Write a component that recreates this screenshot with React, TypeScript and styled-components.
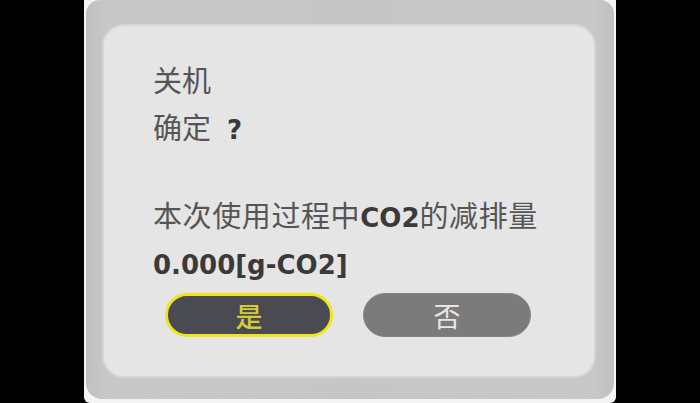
import React from "react";
import styled, { createGlobalStyle } from "styled-components";

const GlobalStyle = createGlobalStyle`
  html, body {
    margin: 0;
    padding: 0;
    background: #000;
    width: 700px;
    height: 403px;
    overflow: hidden;
  }
  #root {
    width: 700px;
    height: 403px;
  }
`;

const Stage = styled.div`
  width: 700px;
  height: 403px;
  display: flex;
  justify-content: center;
  background: #000;
`;

const Edge = styled.div`
  width: 532px;
  height: 403px;
  box-sizing: border-box;
  padding: 0 2px 4px 2px;
  background: #f4f4f4;
  border-radius: 0 0 6px 6px;
  display: flex;
`;

const Frame = styled.div`
  flex: 1;
  box-sizing: border-box;
  padding: 26px 20px 23px 18px;
  background: linear-gradient(90deg, #c0c0c0 0%, #c8c8c8 4%, #c6c6c6 50%, #c8c8c8 96%, #c0c0c0 100%);
  border-radius: 14px 14px 16px 16px;
  display: flex;
`;

const Panel = styled.div`
  flex: 1;
  box-sizing: border-box;
  background: #e5e5e5;
  border-radius: 20px;
  box-shadow: 0 0 0 2px #d6d6d6;
  padding: 30px 0 0 49px;
  display: flex;
  flex-direction: column;
  font-family: "Noto Sans CJK SC", "DejaVu Sans", sans-serif;
`;

const Line = styled.div<{ $gap?: number; $spacing?: number }>`
  height: 47px;
  line-height: 47px;
  margin-top: ${(p) => p.$gap ?? 0}px;
  font-size: 29px;
  font-weight: 400;
  color: #555555;
  white-space: nowrap;
  letter-spacing: ${(p) => p.$spacing ?? 0}px;
`;

const Latin = styled.span`
  font-family: "DejaVu Sans", "Noto Sans CJK SC", sans-serif;
  font-weight: 700;
  font-size: 26px;
  color: #3a3a3a;
  letter-spacing: 0;
`;

const Question = styled(Latin)`
  margin-left: 16px;
`;

const Buttons = styled.div`
  display: flex;
  gap: 30px;
  margin-top: 8px;
  margin-left: 12px;
`;

const Button = styled.div<{ $active?: boolean }>`
  width: 168px;
  height: 44px;
  box-sizing: border-box;
  border-radius: 22px;
  display: flex;
  align-items: center;
  justify-content: center;
  font-family: "Noto Sans CJK SC", sans-serif;
  font-size: 27px;
  line-height: 1;
  background: ${(p) => (p.$active ? "#4a4a52" : "#7b7b7b")};
  border: ${(p) => (p.$active ? "3px solid #ece61a" : "1px solid #858585")};
  color: ${(p) => (p.$active ? "#d2cb3a" : "#e6e6e6")};
  font-weight: ${(p) => (p.$active ? 500 : 400)};
`;

export default function App() {
  return (
    <>
      <GlobalStyle />
      <Stage>
        <Edge>
          <Frame>
            <Panel>
              <Line>关机</Line>
              <Line>
                确定<Question>?</Question>
              </Line>
              <Line $gap={41} $spacing={0.6}>
                本次使用过程中<Latin>CO2</Latin>的减排量
              </Line>
              <Line>
                <Latin>0.000[g-CO2]</Latin>
              </Line>
              <Buttons>
                <Button $active>是</Button>
                <Button>否</Button>
              </Buttons>
            </Panel>
          </Frame>
        </Edge>
      </Stage>
    </>
  );
}
